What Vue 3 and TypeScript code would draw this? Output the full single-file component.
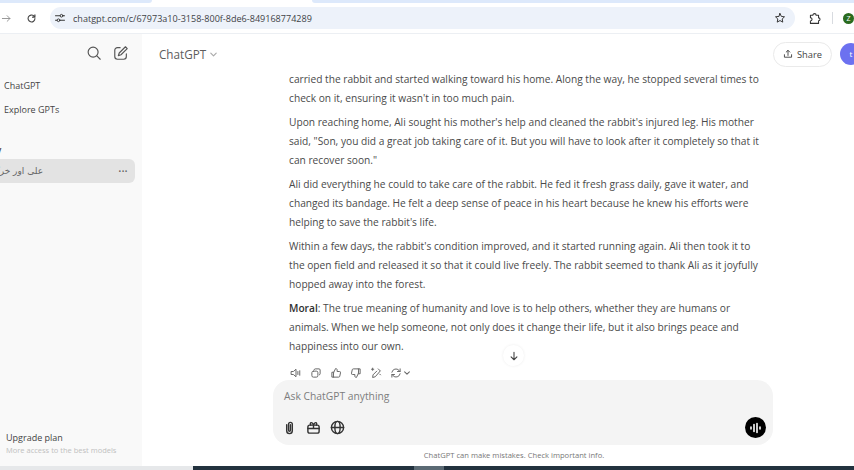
<template>
  <div class="screen">
    <div class="tabstrip">
      <div class="tab-side left"></div>
      <div class="tab-active"></div>
      <div class="tab-side right"></div>
    </div>

    <header class="toolbar">
      <svg class="nav-icon forward" viewBox="0 0 16 16"><path d="M2 8h11M9 4l4 4-4 4" /></svg>
      <svg class="nav-icon reload" viewBox="0 0 16 16"><path d="M13 8a5 5 0 1 1-1.6-3.7L13 6M13 2.5V6H9.5" /></svg>
      <div class="address">
        <svg class="tune" viewBox="0 0 16 16">
          <path d="M2 5h6M12 5h2M2 11h2M8 11h6" />
          <circle cx="10" cy="5" r="1.8" />
          <circle cx="6" cy="11" r="1.8" />
        </svg>
        <span class="url">chatgpt.com/c/67973a10-3158-800f-8de6-849168774289</span>
        <svg class="star" viewBox="0 0 16 16"><path d="M8 2l1.8 3.9 4.2.5-3.1 2.9.8 4.2L8 11.4l-3.7 2.1.8-4.2L2 6.4l4.2-.5z" /></svg>
      </div>
      <svg class="puzzle" viewBox="0 0 16 16">
        <path d="M3 4h3a2 2 0 0 1 4 0h3v3.2a1.8 1.8 0 0 1 0 3.6V14H3v-3a2 2 0 0 0 0-4z" />
      </svg>
      <span class="divider"></span>
      <span class="profile">Z</span>
    </header>

    <div class="page">
      <aside class="sidebar">
        <div class="side-top">
          <svg class="side-icon" viewBox="0 0 18 18"><circle cx="8" cy="8" r="5.6" /><path d="M12.2 12.2L16 16" /></svg>
          <svg class="side-icon" viewBox="0 0 18 18">
            <path d="M8 3H5a3 3 0 0 0-3 3v7a3 3 0 0 0 3 3h7a3 3 0 0 0 3-3v-3" />
            <path d="M14 2l2 2-7 7-3 1 1-3z" />
          </svg>
        </div>
        <div class="side-link first">ChatGPT</div>
        <div class="side-link">Explore GPTs</div>
        <div class="side-date">y</div>
        <div class="history-row">
          <span class="history-title" dir="rtl">علی اور خرگوش</span>
          <span class="dots">•••</span>
        </div>
        <div class="upgrade">
          <div class="upgrade-title">Upgrade plan</div>
          <div class="upgrade-sub">More access to the best models</div>
        </div>
      </aside>

      <main class="main">
        <div class="topbar">
          <div class="model">
            ChatGPT
            <svg class="model-caret" viewBox="0 0 10 10"><path d="M2 3.5l3 3 3-3" /></svg>
          </div>
          <button class="share">
            <svg viewBox="0 0 14 14"><path d="M7 9V2M4.5 4.3L7 1.8l2.500 2.500M2 8v3.500h10V8" /></svg>
            Share
          </button>
          <span class="avatar">t</span>
        </div>

        <div class="thread">
          <p v-for="(para, i) in paragraphs" :key="i" class="para">
            <span v-for="(line, j) in para" :key="j" class="line">
              <b v-if="i === paragraphs.length - 1 && j === 0">Moral</b>{{ line }}
            </span>
          </p>
          <div class="actions">
            <svg viewBox="0 0 16 16"><path d="M2 6h2.500L8 3v10L4.500 10H2zM10.500 6v4M13 5v6" /></svg>
            <svg viewBox="0 0 16 16"><rect x="2.500" y="5.500" width="8" height="8" rx="2" /><path d="M5.500 3.500a1.500 1.500 0 0 1 1.500-1h5a1.500 1.500 0 0 1 1.500 1.500v5a1.500 1.500 0 0 1-1 1.500" /></svg>
            <svg viewBox="0 0 16 16"><path d="M5 7l2.500-5c1.200 0 2 .8 2 2v2h3a1.500 1.500 0 0 1 1.500 1.800l-1 4.500a1.500 1.500 0 0 1-1.500 1.200H5zM5 7H2.500v6.500H5" /></svg>
            <svg viewBox="0 0 16 16"><path d="M11 9l-2.500 5c-1.200 0-2-.8-2-2v-2h-3A1.500 1.500 0 0 1 2 8.200l1-4.500A1.500 1.500 0 0 1 4.500 2.500H11zM11 9h2.500V2.500H11" /></svg>
            <svg viewBox="0 0 16 16"><path d="M13.500 5.500L7 13l-3.500 1 .5-3.500 5-5M2 3h3M3.500 1.500v3M13 9.500l1 1M11 2.500l2.500 2.500" /></svg>
            <span class="regen">
              <svg viewBox="0 0 16 16"><path d="M2.500 7a5.500 5.500 0 0 1 9.500-2.500l1.500 1.500M13.500 9A5.500 5.500 0 0 1 4 11.500L2.500 10M13.500 2.500V6H10M2.500 13.500V10H6" /></svg>
              <svg class="regen-caret" viewBox="0 0 10 10"><path d="M2 3.500l3 3 3-3" /></svg>
            </span>
          </div>
          <button class="scroll-down">
            <svg viewBox="0 0 12 12"><path d="M6 1.500v9M2.500 7L6 10.500 9.500 7" /></svg>
          </button>
        </div>

        <div class="composer">
          <div class="placeholder">Ask ChatGPT anything</div>
          <div class="composer-row">
            <svg class="tool" viewBox="0 0 16 16"><path d="M5 5v6.500a3 3 0 0 0 6 0V4.500a2 2 0 0 0-4 0v6.500a1 1 0 0 0 2 0V5" /></svg>
            <svg class="tool" viewBox="0 0 16 16"><rect x="2" y="5.500" width="12" height="8.500" rx="2" /><path d="M2 9h12M8 5.500V9M5 5.500C3.500 3 6.500 1 8 5.500 9.500 1 12.500 3 11 5.500" /></svg>
            <svg class="tool" viewBox="0 0 16 16"><circle cx="8" cy="8" r="6.500" /><ellipse cx="8" cy="8" rx="2.800" ry="6.500" /><path d="M1.500 8h13" /></svg>
            <span class="voice">
              <svg viewBox="0 0 14 14"><path d="M2 6v2M5 3.500v7M8 2.500v9M11 6v2" /></svg>
            </span>
          </div>
        </div>
        <div class="disclaimer">ChatGPT can make mistakes. Check important info.</div>
      </main>
    </div>

    <div class="taskbar">
      <div class="task-light"></div>
      <div class="task-dark"><span class="task-item"></span></div>
    </div>
  </div>
</template>

<script setup lang="ts">
const paragraphs: string[][] = [
  [
    'carried the rabbit and started walking toward his home. Along the way, he stopped several times to',
    "check on it, ensuring it wasn't in too much pain.",
  ],
  [
    "Upon reaching home, Ali sought his mother's help and cleaned the rabbit's injured leg. His mother",
    'said, "Son, you did a great job taking care of it. But you will have to look after it completely so that it',
    'can recover soon."',
  ],
  [
    'Ali did everything he could to take care of the rabbit. He fed it fresh grass daily, gave it water, and',
    'changed its bandage. He felt a deep sense of peace in his heart because he knew his efforts were',
    "helping to save the rabbit's life.",
  ],
  [
    "Within a few days, the rabbit's condition improved, and it started running again. Ali then took it to",
    'the open field and released it so that it could live freely. The rabbit seemed to thank Ali as it joyfully',
    'hopped away into the forest.',
  ],
  [
    ': The true meaning of humanity and love is to help others, whether they are humans or',
    'animals. When we help someone, not only does it change their life, but it also brings peace and',
    'happiness into our own.',
  ],
]
</script>

<style>
html,
body {
  margin: 0;
  overflow: hidden;
  background: #fff;
}
</style>

<style scoped>
.screen {
  width: 854px;
  height: 470px;
  display: flex;
  flex-direction: column;
  overflow: hidden;
  font-family: "Open Sans", "Noto Sans", sans-serif;
  color: #3c3c3c;
}

svg {
  fill: none;
  stroke: currentColor;
  stroke-width: 1.3;
  stroke-linecap: round;
  stroke-linejoin: round;
  flex: none;
}

.tabstrip {
  height: 3px;
  display: flex;
  flex: none;
}

.tab-side {
  background: #dde9fb;
}

.tab-side.left {
  width: 152px;
  border-radius: 0 0 6px 0;
}

.tab-active {
  width: 160px;
}

.tab-side.right {
  flex: 1;
  border-radius: 0 0 0 6px;
}

.toolbar {
  height: 31px;
  flex: none;
  display: flex;
  align-items: center;
  border-bottom: 1px solid #eceff3;
  box-sizing: border-box;
  padding-left: 1px;
}

.nav-icon {
  width: 11px;
  height: 11px;
}

.forward {
  color: #8d8d8d;
}

.reload {
  margin-left: 14px;
  color: #444;
  stroke-width: 1.6;
}

.address {
  width: 745px;
  height: 22px;
  flex: none;
  margin-left: 13px;
  border-radius: 11px;
  background: #edf2fa;
  display: flex;
  align-items: center;
  padding: 0 9px 0 4px;
  box-sizing: border-box;
}

.tune {
  width: 12px;
  height: 12px;
  color: #333;
}

.url {
  margin-left: 7px;
  font-size: 9.07px;
  color: #3f4347;
  flex: 1;
}

.star {
  width: 12px;
  height: 12px;
  color: #333;
}

.puzzle {
  width: 13px;
  height: 13px;
  margin-left: 13px;
  color: #333;
}

.divider {
  width: 1px;
  height: 12px;
  flex: none;
  background: #d8dbe0;
  margin-left: 11px;
}

.profile {
  width: 11px;
  height: 11px;
  margin-left: 10px;
  border-radius: 50%;
  background: #2a6b1f;
  color: #fff;
  font-size: 7px;
  line-height: 11px;
  text-align: center;
  flex: none;
}

.page {
  flex: 1;
  min-height: 0;
  display: flex;
}

.sidebar {
  width: 142px;
  flex: none;
  background: #f9f9f9;
  display: flex;
  flex-direction: column;
}

.side-top {
  display: flex;
  justify-content: flex-end;
  gap: 11px;
  padding: 11px 13px 0 0;
  color: #555;
}

.side-icon {
  width: 16px;
  height: 16px;
}

.side-link {
  font-size: 9px;
  color: #444;
  line-height: 14px;
  padding-left: 4px;
  margin-top: 10px;
}

.side-link.first {
  margin-top: 18px;
}

.side-date {
  font-size: 8px;
  font-weight: 600;
  line-height: 10px;
  margin: 28px 0 0 -3px;
  color: #333;
}

.history-row {
  width: 135px;
  height: 24px;
  margin-top: 4px;
  background: #e3e3e3;
  border-radius: 0 6px 6px 0;
  display: flex;
  align-items: center;
  justify-content: space-between;
  box-sizing: border-box;
  padding-right: 7px;
  overflow: hidden;
}

.history-title {
  width: 43px;
  overflow: hidden;
  white-space: nowrap;
  font-family: "DejaVu Sans", sans-serif;
  font-size: 9px;
  color: #666;
  text-align: right;
}

.dots {
  font-size: 7px;
  letter-spacing: 0.5px;
  color: #666;
}

.upgrade {
  margin-top: auto;
  padding: 0 0 9px 6px;
}

.upgrade-title {
  font-size: 9px;
  line-height: 12px;
  color: #444;
}

.upgrade-sub {
  font-size: 7.5px;
  line-height: 13px;
  color: #c0c0c0;
}

.main {
  flex: 1;
  min-width: 0;
  display: flex;
  flex-direction: column;
}

.topbar {
  height: 35px;
  flex: none;
  display: flex;
  align-items: center;
  padding: 5px 0 0 17px;
  box-sizing: border-box;
}

.model {
  display: flex;
  align-items: center;
  gap: 3px;
  font-size: 11.7px;
  font-weight: 500;
  color: #5d5d5d;
}

.model-caret {
  width: 9px;
  height: 9px;
  color: #aaa;
}

.share {
  margin-left: auto;
  width: 59px;
  height: 25px;
  border: 1px solid #eaeaea;
  border-radius: 13px;
  background: #fff;
  display: flex;
  align-items: center;
  justify-content: center;
  gap: 4px;
  padding: 0;
  font: inherit;
  font-size: 9.3px;
  color: #444;
}

.share svg {
  width: 10px;
  height: 10px;
}

.avatar {
  width: 22px;
  height: 22px;
  margin: 0 -8px 0 8px;
  border-radius: 50%;
  background: #6c71f0;
  color: #fff;
  font-size: 8px;
  line-height: 22px;
  text-align: center;
  flex: none;
}

.thread {
  position: relative;
  flex: 1;
  min-height: 0;
  padding: 1px 0 0 147px;
  font-size: 10.2px;
  line-height: 19px;
  color: #4a4a4a;
}

.para {
  margin: 0 0 5px;
}

.line {
  display: block;
  white-space: nowrap;
}

.line b {
  font-weight: 600;
  color: #2f2f2f;
}

.actions {
  display: flex;
  align-items: center;
  gap: 8px;
  margin: 11px 0 0 1px;
  color: #666;
}

.actions svg {
  width: 12px;
  height: 12px;
}

.regen {
  display: flex;
  align-items: center;
  gap: 1px;
}

.actions .regen-caret {
  width: 8px;
  height: 8px;
}

.scroll-down {
  position: absolute;
  left: 361px;
  bottom: 13px;
  width: 21px;
  height: 21px;
  padding: 0;
  border: 0;
  border-radius: 50%;
  background: #fff;
  box-shadow: 0 0 3px #ececec;
  color: #444;
  display: flex;
  align-items: center;
  justify-content: center;
}

.scroll-down svg {
  width: 10px;
  height: 10px;
}

.composer {
  width: 500px;
  height: 65px;
  margin: 1px 0 0 131px;
  flex: none;
  border-radius: 16px;
  background: #f4f4f4;
  box-sizing: border-box;
  padding: 7px 7px 0 9px;
}

.placeholder {
  margin-left: 2px;
  font-size: 10.3px;
  line-height: 18px;
  color: #7d7d7d;
}

.composer-row {
  display: flex;
  align-items: center;
  gap: 9px;
  margin-top: 12px;
  color: #333;
}

.tool {
  width: 15px;
  height: 15px;
  stroke-width: 1.5;
}

.voice {
  width: 21px;
  height: 21px;
  margin-left: auto;
  border-radius: 50%;
  background: #000;
  color: #fff;
  display: flex;
  align-items: center;
  justify-content: center;
}

.voice svg {
  width: 14px;
  height: 14px;
  stroke-width: 1.6;
}

.disclaimer {
  height: 21px;
  flex: none;
  font-size: 7.6px;
  line-height: 21px;
  text-align: center;
  color: #777;
  padding-left: 32px;
}

.taskbar {
  height: 4px;
  flex: none;
  display: flex;
}

.task-light {
  width: 193px;
  background: #e6e8ea;
}

.task-dark {
  flex: 1;
  background: #22323e;
  position: relative;
}

.task-item {
  position: absolute;
  left: 221px;
  top: 0;
  width: 30px;
  height: 4px;
  background: #5b6a74;
}
</style>
